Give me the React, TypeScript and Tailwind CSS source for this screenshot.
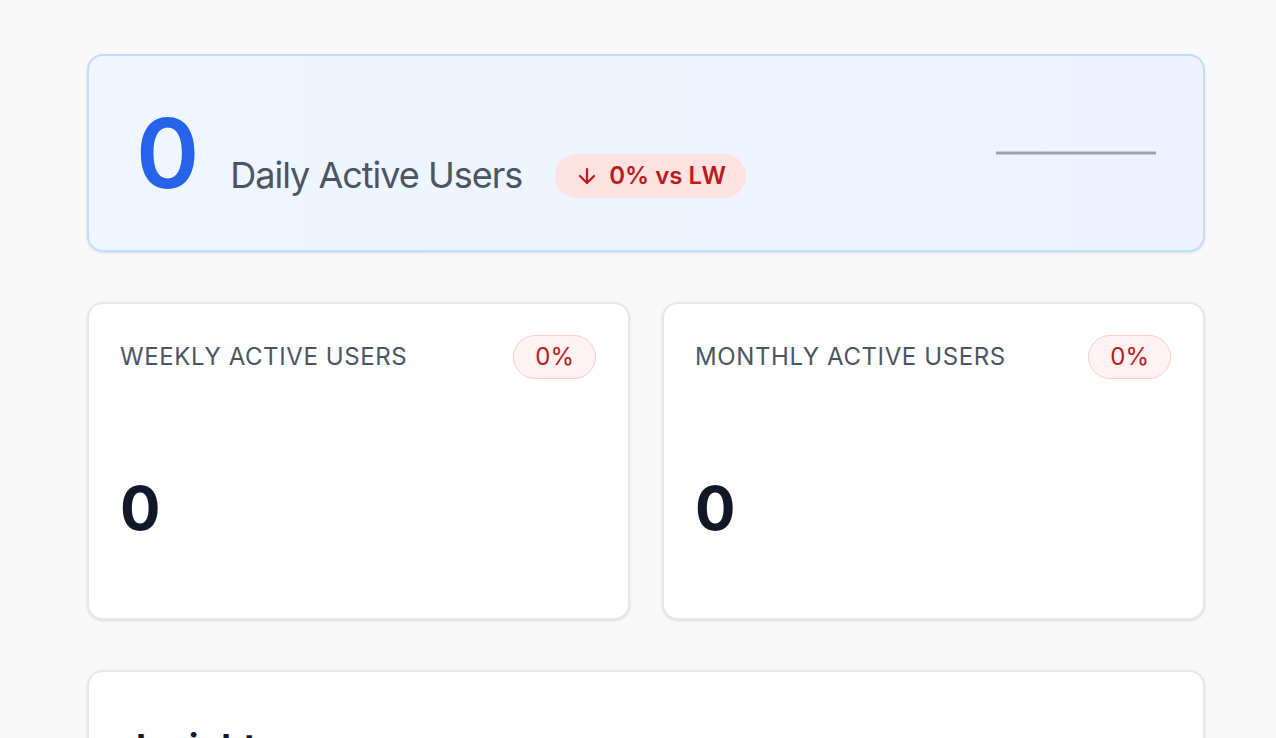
import React from "react";
import { ArrowDown } from "lucide-react";

function StatCard({ label }: { label: string }) {
  return (
    <div className="flex h-[318px] flex-col rounded-2xl border-2 border-[#e5e7eb] bg-white p-[31px] shadow-sm">
      <div className="flex items-center justify-between">
        <span className="text-2xl uppercase tracking-wide text-[#4b5563]">{label}</span>
        <span className="mr-px flex h-[44px] items-center rounded-full border border-[#fecaca] bg-[#fef2f2] px-[21px] text-2xl text-[#b91c1c]">
          0%
        </span>
      </div>
      <div className="mt-[99px] text-6xl font-bold leading-none text-[#111827]">0</div>
    </div>
  );
}

export default function App() {
  return (
    <div
      className="min-h-screen bg-[#f9f9f9] pl-[87px] pt-[54px]"
      style={{ fontFamily: "Inter, 'Noto Sans', sans-serif" }}
    >
      <div className="flex w-[1118px] flex-col gap-[50px]">
        <div className="flex h-[198px] items-center justify-between rounded-2xl border-2 border-[#bfdbfe] bg-linear-to-r from-[#eff6ff] to-[#eef2ff] px-[47px] shadow-sm">
          <div className="flex items-baseline">
            <span className="text-8xl font-semibold leading-none text-[#2563eb]">0</span>
            <span className="ml-[31px] text-4xl tracking-[-0.028em] text-[#4b5563]">Daily Active Users</span>
            <span className="ml-[33px] inline-flex h-[44px] items-center gap-2.5 rounded-full bg-[#fee2e2] px-5 text-2xl font-semibold text-[#b91c1c]">
              <ArrowDown size={24} strokeWidth={2.25} />
              <span>0% vs LW</span>
            </span>
          </div>
          <svg width="160" height="40" viewBox="0 0 160 40" className="shrink-0">
            <line x1="0" y1="20" x2="160" y2="20" stroke="#9ca3af" strokeWidth="3" />
          </svg>
        </div>

        <div className="grid grid-cols-2 gap-8">
          <StatCard label="Weekly Active Users" />
          <StatCard label="Monthly Active Users" />
        </div>

        <div className="h-[300px] rounded-2xl border-2 border-[#e5e7eb] bg-white px-[47px] pt-[55px] shadow-sm">
          <h2 className="text-4xl font-bold text-[#111827]">Insights</h2>
        </div>
      </div>
    </div>
  );
}
